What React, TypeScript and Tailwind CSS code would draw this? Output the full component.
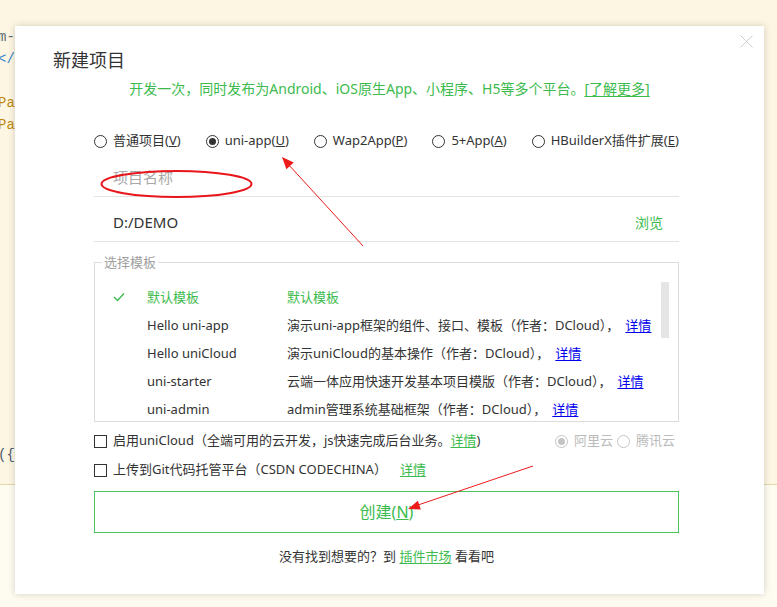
import React from "react";

const font = "font-['Noto_Sans','Noto_Sans_CJK_SC',sans-serif]";
const green = "text-[#3dbb4e]";

type Tpl = { name: string; desc: string; selected?: boolean };

const templates: Tpl[] = [
  { name: "默认模板", desc: "默认模板", selected: true },
  { name: "Hello uni-app", desc: "演示uni-app框架的组件、接口、模板（作者：DCloud），" },
  { name: "Hello uniCloud", desc: "演示uniCloud的基本操作（作者：DCloud），" },
  { name: "uni-starter", desc: "云端一体应用快速开发基本项目模版（作者：DCloud），" },
  { name: "uni-admin", desc: "admin管理系统基础框架（作者：DCloud），" },
];

const codeLines: { text: string; color: string }[] = [
  { text: "m-view class=\"content\">", color: "text-[#5b6b70]" },
  { text: "</template>", color: "text-[#3a86d0]" },
  { text: "", color: "" },
  { text: "Page({ data: {} })", color: "text-[#c08a10]" },
  { text: "Page({ onLoad() {} })", color: "text-[#c08a10]" },
  ...Array.from({ length: 14 }, () => ({ text: "", color: "" })),
  { text: "({ title: 'Hello' })", color: "text-[#4a5a70]" },
];

function Radio({ checked, gray, children }: { checked?: boolean; gray?: boolean; children: React.ReactNode }) {
  const ring = gray ? "border-[#c4c4c4]" : "border-[#333]";
  const dot = gray ? "bg-[#c4c4c4]" : "bg-[#333]";
  return (
    <label className="flex shrink-0 items-center gap-[6px] whitespace-nowrap">
      <span className={`flex h-[13px] w-[13px] items-center justify-center rounded-full border ${ring}`}>
        {checked && <span className={`h-[7px] w-[7px] rounded-full ${dot}`} />}
      </span>
      <span className={gray ? "text-[#bbb]" : "text-[#333]"}>{children}</span>
    </label>
  );
}

function Checkbox({ children }: { children: React.ReactNode }) {
  return (
    <label className="flex items-center gap-[6px] whitespace-nowrap">
      <span className="h-[13px] w-[13px] shrink-0 border border-[#333]" />
      <span className="text-[#333]">{children}</span>
    </label>
  );
}

function Annotations() {
  return (
    <svg className="pointer-events-none absolute left-0 top-0" width="777" height="607" viewBox="0 0 777 607">
      <ellipse cx="176.5" cy="184" rx="75" ry="13" fill="none" stroke="#e8161b" strokeWidth="2" />
      <line x1="363" y1="246" x2="288" y2="164" stroke="#ee1b1b" strokeWidth="1" />
      <polygon points="282,157 293.8,162.5 286.4,169.3" fill="#ee1b1b" />
      <line x1="533" y1="466" x2="418" y2="505" stroke="#ee1b1b" strokeWidth="1" />
      <polygon points="408,509 420.8,509.4 417.9,500.8" fill="#ee1b1b" />
    </svg>
  );
}

export default function App() {
  return (
    <div className={`relative h-[607px] w-[777px] overflow-hidden ${font} text-[13px]`}>
      {/* editor behind the modal */}
      <div className="flex h-[485px] flex-col border-b border-[#e2d6ab] bg-[#fdf6e3] pt-[26px] font-['Liberation_Mono',monospace] text-[14px]">
        {codeLines.map((l, i) => (
          <div key={i} className={`-ml-[2px] h-[22px] leading-[22px] whitespace-pre ${l.color}`}>
            {l.text}
          </div>
        ))}
      </div>
      <div className="h-[122px] bg-[#fefbf0] pt-[119px] font-['Liberation_Mono',monospace] text-[14px] leading-[20px]">
        <span className="pl-[46px] text-[#1c2a8a]">data </span>
        <span className="text-[#c0283a]">= </span>
        <span className="text-[#1c2a8a]">this.list</span>
      </div>

      {/* dialog */}
      <div className="absolute left-[15px] top-[26px] h-[568px] w-[749px] bg-white shadow-[0_0_7px_rgba(0,0,0,0.18)]">
        <button type="button" aria-label="关闭" className="absolute left-[725px] top-[9px] h-[13px] w-[13px]">
          <svg width="13" height="13" viewBox="0 0 13 13">
            <path d="M0.5 0.5 L12.5 12.5 M12.5 0.5 L0.5 12.5" stroke="#cacaca" strokeWidth="0.9" />
          </svg>
        </button>

        <div className="pl-[38px] pt-[22px] text-[18px] leading-[24px] text-[#333]">新建项目</div>
        <div className={`mt-[7px] text-center text-[14px] leading-[20px] ${green}`}>
          开发一次，同时发布为Android、iOS原生App、小程序、H5等多个平台。<span className="underline underline-offset-2">[了解更多]</span>
        </div>

        <div className="ml-[79px] w-[585px]">
          <div className="mt-[32px] flex h-[20px] items-center gap-[25px]">
            <Radio>
              普通项目(<u>V</u>)
            </Radio>
            <Radio checked>
              uni-app(<u>U</u>)
            </Radio>
            <Radio>
              Wap2App(<u>P</u>)
            </Radio>
            <Radio>
              5+App(<u>A</u>)
            </Radio>
            <Radio>
              HBuilderX插件扩展(<u>E</u>)
            </Radio>
          </div>

          <div className="flex h-[46px] items-center border-b border-[#e3e3e3] pl-[19px] pt-[7px] text-[15px] text-[#a8a8a8]">
            项目名称
          </div>
          <div className="flex h-[45px] items-center justify-between border-b border-[#e3e3e3] pl-[19px] pr-[16px] pt-[7px] text-[15px]">
            <span className="text-[#333]">D:/DEMO</span>
            <span className={`text-[14px] ${green}`}>浏览</span>
          </div>

          <div className="relative mt-[20px] h-[160px] border border-[#dcdcdc]">
            <span className="absolute -top-[10px] left-[7px] bg-white px-[2px] text-[13px] leading-[18px] text-[#a0a0a0]">
              选择模板
            </span>
            <div className="h-full overflow-hidden pt-[20px]">
              {templates.map((t) => (
                <div key={t.name} className="flex h-[28px] items-center whitespace-nowrap pl-[18px] leading-[28px]">
                  <span className="flex w-[34px] items-center">
                    {t.selected && (
                      <svg width="12" height="10" viewBox="0 0 12 10">
                        <polyline points="1,5 4.5,8.5 11,1.5" fill="none" stroke="#3dbb4e" strokeWidth="1.4" />
                      </svg>
                    )}
                  </span>
                  <span className={`w-[140px] ${t.selected ? "text-[#3dbb4e]" : "text-[#333]"}`}>{t.name}</span>
                  <span className={t.selected ? "text-[#3dbb4e]" : "text-[#333]"}>
                    {t.desc}
                    {!t.selected && <span className="ml-[6px] text-[#0000ee] underline underline-offset-2">详情</span>}
                  </span>
                </div>
              ))}
            </div>
            <span className="absolute left-[566px] top-[19px] h-[56px] w-[8px] bg-[#e5e5e5]" />
          </div>

          <div className="mt-[9px] flex h-[20px] items-center justify-between pr-[4px]">
            <Checkbox>
              启用uniCloud（全端可用的云开发，js快速完成后台业务。
              <span className={`${green} underline underline-offset-2`}>详情</span>)
            </Checkbox>
            <div className="flex items-center gap-[4px]">
              <Radio checked gray>
                阿里云
              </Radio>
              <Radio gray>腾讯云</Radio>
            </div>
          </div>
          <div className="mt-[9px] flex h-[20px] items-center">
            <Checkbox>
              上传到Git代码托管平台（CSDN CODECHINA）
              <span className={`ml-[13px] ${green} underline underline-offset-2`}>详情</span>
            </Checkbox>
          </div>

          <button
            type="button"
            className={`mt-[11px] flex h-[42px] w-full items-center justify-center border border-[#4cc35a] text-[16px] ${green}`}
          >
            创建(<u>N</u>)
          </button>

          <div className="mt-[13px] text-center leading-[20px] text-[#333]">
            没有找到想要的？到 <span className={`${green} underline underline-offset-2`}>插件市场</span> 看看吧
          </div>
        </div>
      </div>

      <Annotations />
    </div>
  );
}
